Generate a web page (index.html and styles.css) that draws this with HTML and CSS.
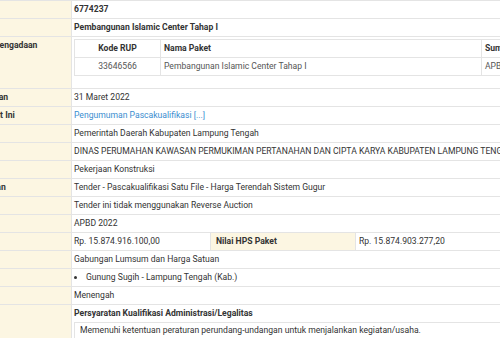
FILE: index.html
```html
<!DOCTYPE html>
<html>
<head>
<meta charset="utf-8">
<link rel="stylesheet" href="styles.css">
</head>
<body>
<div class="viewport">
  <table class="detail">
    <tr><th class="lbl">Kode Tender</th><td class="val strong">6774237</td></tr>
    <tr><th class="lbl">Nama Tender</th><td class="val strong">Pembangunan Islamic Center Tahap I</td></tr>
    <tr><th class="lbl">Rencana Umum Pengadaan</th>
      <td class="val box">
        <table class="sub rup">
          <tr><th class="c1">Kode RUP</th><th class="c2">Nama Paket</th><th class="c3">Sumber Dana</th></tr>
          <tr><td class="c1">33646566</td><td class="c2">Pembangunan Islamic Center Tahap I</td><td class="c3">APBD</td></tr>
        </table>
      </td></tr>
    <tr><th class="lbl">Tanggal Pembuatan</th><td class="val">31 Maret 2022</td></tr>
    <tr><th class="lbl">Tahap Tender Saat Ini</th><td class="val"><a class="link" href="#">Pengumuman Pascakualifikasi [...]</a></td></tr>
    <tr><th class="lbl">K/L/PD</th><td class="val">Pemerintah Daerah Kabupaten Lampung Tengah</td></tr>
    <tr><th class="lbl">Satuan Kerja</th><td class="val">DINAS PERUMAHAN KAWASAN PERMUKIMAN PERTANAHAN DAN CIPTA KARYA KABUPATEN LAMPUNG TENGAH</td></tr>
    <tr><th class="lbl">Jenis Pengadaan</th><td class="val">Pekerjaan Konstruksi</td></tr>
    <tr><th class="lbl">Metode Pengadaan</th><td class="val">Tender - Pascakualifikasi Satu File - Harga Terendah Sistem Gugur</td></tr>
    <tr><th class="lbl">Keterangan</th><td class="val">Tender ini tidak menggunakan Reverse Auction</td></tr>
    <tr><th class="lbl">Tahun Anggaran</th><td class="val">APBD 2022</td></tr>
    <tr><th class="lbl">Nilai Pagu Paket</th>
      <td class="val flat">
        <div class="pair">
          <span class="pv first">Rp. 15.874.916.100,00</span>
          <span class="pl">Nilai HPS Paket</span>
          <span class="pv">Rp. 15.874.903.277,20</span>
        </div>
      </td></tr>
    <tr><th class="lbl">Jenis Kontrak</th><td class="val">Gabungan Lumsum dan Harga Satuan</td></tr>
    <tr><th class="lbl">Lokasi Pekerjaan</th><td class="val"><ul class="loc"><li>Gunung Sugih - Lampung Tengah (Kab.)</li></ul></td></tr>
    <tr><th class="lbl">Kualifikasi Usaha</th><td class="val">Menengah</td></tr>
    <tr><th class="lbl">Syarat Kualifikasi</th>
      <td class="val box">
        <div class="strong">Persyaratan Kualifikasi Administrasi/Legalitas</div>
        <table class="sub req">
          <tr><td>Memenuhi ketentuan peraturan perundang-undangan untuk menjalankan kegiatan/usaha.</td></tr>
          <tr><td>Memiliki Nomor Induk Berusaha (NIB).</td></tr>
        </table>
      </td></tr>
  </table>
</div>
</body>
</html>
```

FILE: styles.css
```css
html, body {
  margin: 0;
  padding: 0;
  background: #ffffff;
}

.viewport {
  width: 500px;
  height: 338px;
  overflow: hidden;
}

.detail {
  margin-left: -72px;
  border-collapse: collapse;
  width: 760px;
  font-family: Roboto, "Liberation Sans", Arial, sans-serif;
  font-size: 8.6px;
  line-height: 12px;
  color: #333333;
  white-space: nowrap;
}

.detail > tbody > tr > th,
.detail > tbody > tr > td {
  border-top: 1px solid #e4e4e4;
  padding: 2px 3px 3px 3px;
  vertical-align: top;
  text-align: left;
}

.detail > tbody > tr > th.lbl {
  width: 137px;
  background: #fcf6e2;
  font-weight: bold;
  overflow: hidden;
}

.detail > tbody > tr > td.val {
  background: #ffffff;
  border-left: 1px solid #e4e4e4;
  padding-left: 2px;
}

.strong {
  font-weight: bold;
}

.sub {
  border-collapse: collapse;
  border: 1px solid #e4e4e4;
}

.sub th,
.sub td {
  border: 1px solid #e4e4e4;
  padding: 2px 3px 3px 3px;
  text-align: left;
  font-weight: normal;
  color: #555555;
}

.sub th {
  font-weight: bold;
  color: #333333;
}

.rup {
  margin-bottom: 9px;
}

.rup .c1 {
  width: 79px;
  text-align: center;
}

.rup .c2 {
  width: 314px;
}

.rup .c3 {
  width: 80px;
}

.link {
  color: #3a8dcf;
  text-decoration: none;
}

.detail > tbody > tr > td.flat {
  padding: 0;
}

.pair {
  display: grid;
  grid-template-columns: 138px 146px auto;
}

.pv {
  padding: 2px 3px 3px 3px;
}

.pv.first {
  padding-left: 2px;
}

.pl {
  padding: 2px 3px 3px 5px;
  background: #fcf6e2;
  font-weight: bold;
  border-left: 1px solid #e4e4e4;
  border-right: 1px solid #e4e4e4;
}

.loc {
  margin: 0;
  padding: 0 0 0 12px;
  list-style: disc;
}

.req {
  margin-top: 3px;
  width: 600px;
}

.req td {
  padding: 1px 5px 3px 5px;
  color: #333333;
}
```
